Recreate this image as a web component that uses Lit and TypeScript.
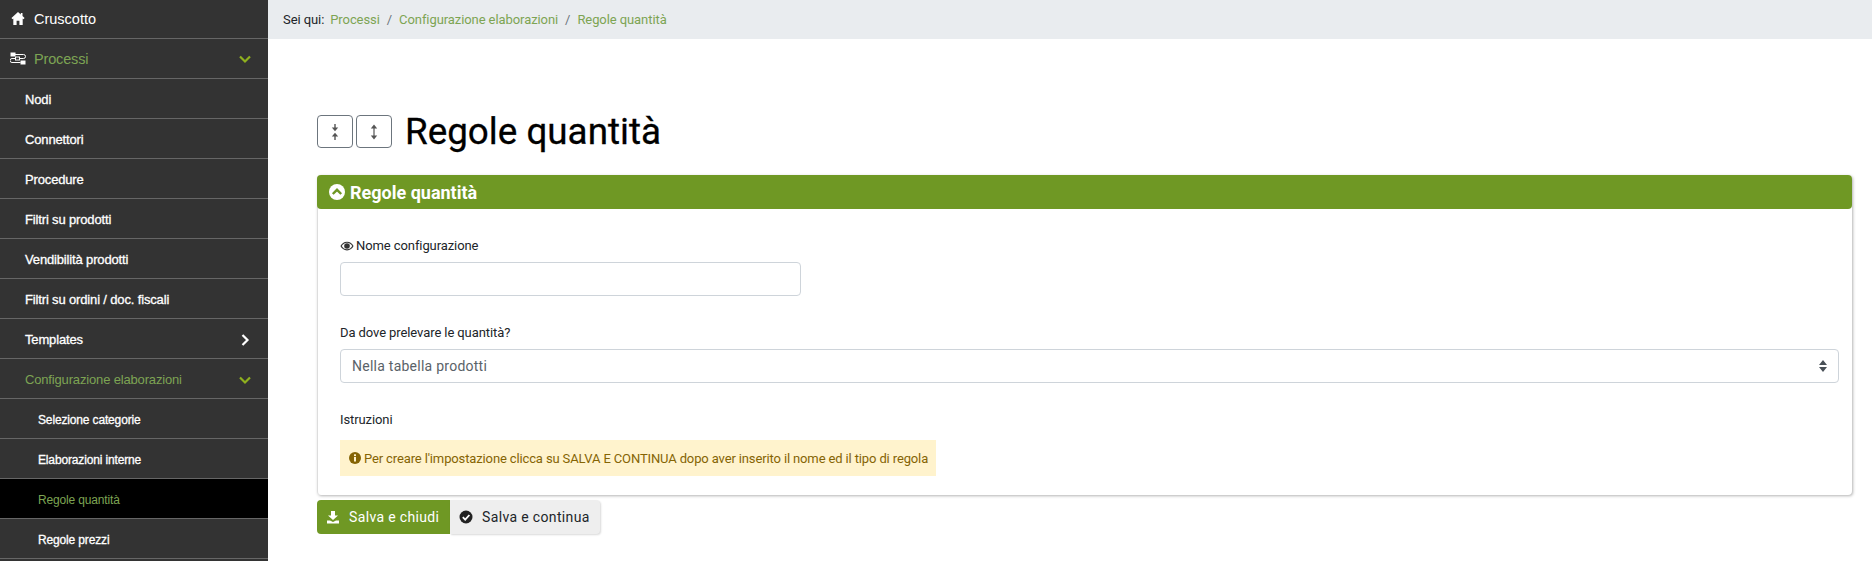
import { LitElement, html, css, svg } from "lit";
import { customElement } from "lit/decorators.js";

const chevDown = svg`<path d="M2 4.5 L7 9.5 L12 4.5" fill="none" stroke="currentColor" stroke-width="2.2"/>`;
const chevRight = svg`<path d="M4.5 2 L9.5 7 L4.5 12" fill="none" stroke="currentColor" stroke-width="2.2"/>`;

@customElement("app-root")
export class AppRoot extends LitElement {
  static styles = css`
    :host { display: block; width: 1872px; height: 561px; overflow: hidden; font-family: Roboto, sans-serif; color: #212529; background: #fff; }
    .page { display: flex; height: 561px; overflow: hidden; }
    .side { width: 268px; flex: none; background: #333; font-family: "Liberation Sans", sans-serif; color: #fff; margin-top: -1px; }
    .row { height: 37px; padding-top: 2px; border-bottom: 1px solid #666; display: flex; align-items: center; font-size: 13px; font-weight: 400; -webkit-text-stroke: 0.3px #fff; letter-spacing: -0.15px; padding-left: 25px; padding-right: 16px; }
    .row.top { font-size: 14.5px; height: 39px; padding-top: 0; -webkit-text-stroke: 0; letter-spacing: 0; padding-left: 10px; gap: 8px; }
    .row.sub { padding-left: 38px; font-size: 12px; }
    .row.green { color: #7da453; -webkit-text-stroke: 0; letter-spacing: -0.16px; }
    .row.active { background: #000; }
    .row .label { flex: 1; }
    .row .ic { width: 14px; height: 14px; flex: none; display: block; }
    .row .ic.lime { color: #8fb01e; }
    .ticon { width: 16px; height: 15px; flex: none; display: block; }
    .main { flex: 1; min-width: 0; }
    .crumb { height: 39px; background: #e9ecef; display: flex; align-items: center; padding-left: 15px; font-size: 13px; letter-spacing: -0.08px; }
    .crumb .here { margin-right: 6px; }
    .crumb a { color: #7da453; }
    .crumb .sep { color: #6c757d; margin: 0 7px; }
    .content { padding: 76px 20px 0 49px; }
    .head { display: flex; align-items: center; height: 33px; }
    .tool { width: 36px; height: 33px; box-sizing: border-box; border: 1px solid #6c757d; border-radius: 4px; margin-right: 3px; display: flex; align-items: center; justify-content: center; color: #555; }
    .tool svg { width: 10px; height: 18px; }
    h1 { font: 400 36.8px/40px Roboto, sans-serif; -webkit-text-stroke: 0.3px #000; color: #000; margin: 1px 0 0 10px; }
    .panel { margin-top: 27px; width: 1535px; border-radius: 4px; box-shadow: 1px 1px 3px rgba(0,0,0,.3); border-left: 1px solid #ddd; box-sizing: border-box; }
    .phead { height: 34px; background: #6f9824; color: #fff; border-radius: 4px; margin-left: -1px; display: flex; align-items: center; padding-left: 12px; font-size: 18px; font-weight: 700; gap: 5px; }
    .phead svg { width: 16px; height: 16px; }
    .pbody { padding: 26px 13px 20px 22px; height: 286px; box-sizing: border-box; }
    label { display: flex; align-items: center; gap: 2px; font-size: 13px; line-height: 20px; color: #212529; letter-spacing: -0.09px; position: relative; top: 1px; }
    label svg { width: 14px; height: 14px; }
    .input { width: 461px; height: 34px; box-sizing: border-box; border: 1px solid #ced4da; border-radius: 4px; margin-top: 7px; background: #fff; }
    .select { height: 34px; box-sizing: border-box; border: 1px solid #ced4da; border-radius: 4px; margin-top: 7px; display: flex; align-items: center; justify-content: space-between; padding: 0 11px 0 11px; font-size: 14px; color: #5a6268; letter-spacing: 0.25px; }
    .select svg { width: 8px; height: 12px; }
    .f2 { margin-top: 26px; }
    .f3 { margin-top: 26px; }
    .note { display: flex; align-items: center; gap: 3px; margin-top: 11px; height: 36px; background: #fff3cd; color: #856404; font-size: 13px; letter-spacing: -0.13px; padding: 0 9px; width: 596px; box-sizing: border-box; white-space: nowrap; }
    .note svg { width: 12px; height: 12px; flex: none; }
    .btns { display: flex; margin-top: 5px; }
    .btn { height: 34px; display: flex; align-items: center; font-size: 14px; letter-spacing: 0.35px; gap: 9px; padding: 0 0 0 9px; box-sizing: border-box; white-space: nowrap; }
    .btn svg { width: 14px; height: 14px; flex: none; }
    .b1 { background: #6f9824; color: #fff; border-radius: 4px 0 0 4px; width: 133px; }
    .b2 { background: #eee; color: #212529; border-radius: 0 4px 4px 0; width: 150px; box-shadow: 1px 1px 2px rgba(0,0,0,.15); }
  `;

  row(label: string, cls = "", icon: unknown = null) {
    return html`<div class="row ${cls}"><span class="label">${label}</span>${icon}</div>`;
  }

  render() {
    return html`<div class="page">
      <nav class="side">
        <div class="row top">
          <svg class="ticon" viewBox="0 0 16 16"><path fill="#fff" d="M8 1 L1 7.5 L2.2 8.8 L3 8 V15 H6.5 V10.5 H9.5 V15 H13 V8 L13.8 8.8 L15 7.5 L12.8 5.4 V2 H11 V3.8 Z"/></svg>
          <span class="label">Cruscotto</span>
        </div>
        <div class="row top green">
          <svg class="ticon" viewBox="0 0 16 12" fill="none" stroke="#fff" stroke-width="1"><path d="M5 2 H13.5 A2 2 0 0 1 13.5 6 H10 M5.5 6 H2 A2 2 0 0 0 2 10 H10.5"/><rect x="1" y=".5" width="4" height="3" fill="#fff"/><rect x="5.5" y="4.5" width="4" height="3"/><rect x="11" y="8.5" width="4" height="3" fill="#fff"/></svg>
          <span class="label">Processi</span>
          <svg class="ic lime" viewBox="0 0 14 14">${chevDown}</svg>
        </div>
        ${this.row("Nodi")}
        ${this.row("Connettori")}
        ${this.row("Procedure")}
        ${this.row("Filtri su prodotti")}
        ${this.row("Vendibilità prodotti")}
        ${this.row("Filtri su ordini / doc. fiscali")}
        ${this.row("Templates", "", html`<svg class="ic" viewBox="0 0 14 14">${chevRight}</svg>`)}
        ${this.row("Configurazione elaborazioni", "green", html`<svg class="ic lime" viewBox="0 0 14 14">${chevDown}</svg>`)}
        ${this.row("Selezione categorie", "sub")}
        ${this.row("Elaborazioni interne", "sub")}
        ${this.row("Regole quantità", "sub green active")}
        ${this.row("Regole prezzi", "sub")}
      </nav>
      <div class="main">
        <div class="crumb">
          <span class="here">Sei qui:</span><a>Processi</a><span class="sep">/</span><a>Configurazione elaborazioni</a><span class="sep">/</span><a>Regole quantità</a>
        </div>
        <div class="content">
          <div class="head">
            <div class="tool"><svg viewBox="0 0 10 18"><path d="M5 1 V5 M5 13 V17" stroke="currentColor" stroke-width="1.4" fill="none"/><path d="M1.8 4.5 H8.2 L5 8.3 Z M1.8 13.5 H8.2 L5 9.7 Z" fill="currentColor"/></svg></div>
            <div class="tool"><svg viewBox="0 0 10 18"><path d="M5 3 V15" stroke="currentColor" stroke-width="1.2" fill="none"/><path d="M1.8 5.5 H8.2 L5 1.5 Z M1.8 12.5 H8.2 L5 16.5 Z" fill="currentColor"/></svg></div>
            <h1>Regole quantità</h1>
          </div>
          <section class="panel">
            <div class="phead">
              <svg viewBox="0 0 16 16"><circle cx="8" cy="8" r="8" fill="#fff"/><path d="M3.8 10 L8 5.8 L12.2 10" fill="none" stroke="#6f9824" stroke-width="2.4"/></svg>
              <span>Regole quantità</span>
            </div>
            <div class="pbody">
              <label>
                <svg viewBox="0 0 16 16"><path fill="#333" d="M8 3 C4.5 3 1.8 5.2 .5 8 C1.8 10.8 4.5 13 8 13 C11.5 13 14.2 10.8 15.5 8 C14.2 5.2 11.5 3 8 3 Z"/><path fill="#fff" d="M8 4.2 C5.4 4.2 3.2 5.8 2 8 C3.2 10.2 5.4 11.8 8 11.8 C10.6 11.8 12.8 10.2 14 8 C12.8 5.8 10.6 4.2 8 4.2 Z"/><circle cx="8" cy="8" r="3.2" fill="#333"/></svg>
                Nome configurazione
              </label>
              <div class="input"></div>
              <label class="f2">Da dove prelevare le quantità?</label>
              <div class="select">
                <span>Nella tabella prodotti</span>
                <svg viewBox="0 0 8 12"><path fill="#495057" d="M4 0 L8 5 H0 Z M0 7 H8 L4 12 Z"/></svg>
              </div>
              <label class="f3">Istruzioni</label>
              <div class="note">
                <svg viewBox="0 0 12 12"><circle cx="6" cy="6" r="6" fill="#856404"/><rect x="5" y="5" width="2" height="4.5" fill="#fff3cd"/><rect x="5" y="2.3" width="2" height="1.8" fill="#fff3cd"/></svg>
                <span>Per creare l'impostazione clicca su SALVA E CONTINUA dopo aver inserito il nome ed il tipo di regola</span>
              </div>
            </div>
          </section>
          <div class="btns">
            <div class="btn b1">
              <svg viewBox="0 0 14 14"><path fill="#fff" d="M5 1 H9 V5.5 H12 L7 10 L2 5.5 H5 Z M1 10.5 H4 L7 12 L10 10.5 H13 V13.5 H1 Z"/></svg>
              <span>Salva e chiudi</span>
            </div>
            <div class="btn b2">
              <svg viewBox="0 0 14 14"><circle cx="7" cy="7" r="6.5" fill="#222"/><path d="M3.8 7.2 L6.2 9.6 L10.4 5" fill="none" stroke="#fff" stroke-width="1.8"/></svg>
              <span>Salva e continua</span>
            </div>
          </div>
        </div>
      </div>
    </div>`;
  }
}
